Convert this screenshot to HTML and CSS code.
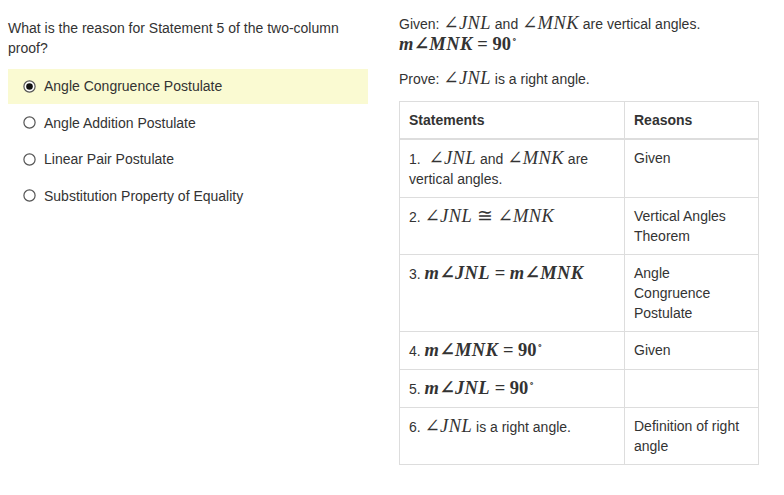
FILE: index.html
```html
<!DOCTYPE html>
<html>
<head>
<meta charset="utf-8">
<link rel="stylesheet" href="styles.css">
</head>
<body>
<div class="page">
  <div class="left">
    <p class="question">What is the reason for Statement 5 of the two-column proof?</p>
    <ul class="options">
      <li class="option selected">
        <svg class="radio" width="13" height="13" viewBox="0 0 13 13"><circle cx="6.5" cy="6.5" r="5.6" fill="#fff" stroke="#555" stroke-width="1.2"/><circle cx="6.5" cy="6.5" r="3.3" fill="#111"/></svg>
        <span>Angle Congruence Postulate</span>
      </li>
      <li class="option">
        <svg class="radio" width="13" height="13" viewBox="0 0 13 13"><circle cx="6.5" cy="6.5" r="5.6" fill="#fff" stroke="#555" stroke-width="1.2"/></svg>
        <span>Angle Addition Postulate</span>
      </li>
      <li class="option">
        <svg class="radio" width="13" height="13" viewBox="0 0 13 13"><circle cx="6.5" cy="6.5" r="5.6" fill="#fff" stroke="#555" stroke-width="1.2"/></svg>
        <span>Linear Pair Postulate</span>
      </li>
      <li class="option">
        <svg class="radio" width="13" height="13" viewBox="0 0 13 13"><circle cx="6.5" cy="6.5" r="5.6" fill="#fff" stroke="#555" stroke-width="1.2"/></svg>
        <span>Substitution Property of Equality</span>
      </li>
    </ul>
  </div>
  <div class="right">
    <p class="given">Given: <span class="m">∠<i>JNL</i></span> and <span class="m">∠<i>MNK</i></span> are vertical angles.<br><span class="m b"><i>m</i>∠<i>MNK</i> = 90<sup>∘</sup></span></p>
    <p class="prove">Prove: <span class="m">∠<i>JNL</i></span> is a right angle.</p>
    <table class="proof">
      <thead>
        <tr><th class="c1">Statements</th><th class="c2">Reasons</th></tr>
      </thead>
      <tbody>
        <tr><td>1. &nbsp;<span class="m">∠<i>JNL</i></span> and <span class="m">∠<i>MNK</i></span> are vertical angles.</td><td>Given</td></tr>
        <tr><td>2. <span class="m">∠<i>JNL</i> ≅ ∠<i>MNK</i></span></td><td>Vertical Angles Theorem</td></tr>
        <tr><td>3. <span class="m b"><i>m</i>∠<i>JNL</i> = <i>m</i>∠<i>MNK</i></span></td><td>Angle Congruence Postulate</td></tr>
        <tr><td>4. <span class="m b"><i>m</i>∠<i>MNK</i> = 90<sup>∘</sup></span></td><td>Given</td></tr>
        <tr><td>5. <span class="m b"><i>m</i>∠<i>JNL</i> = 90<sup>∘</sup></span></td><td></td></tr>
        <tr><td>6. <span class="m">∠<i>JNL</i></span> is a right angle.</td><td>Definition of right angle</td></tr>
      </tbody>
    </table>
  </div>
</div>
</body>
</html>
```
FILE: styles.css
```css
html, body {
  margin: 0;
  padding: 0;
  background: #fff;
}
body {
  font-family: "Liberation Sans", Arial, sans-serif;
  font-size: 14px;
  line-height: 20px;
  color: #333;
}
.page {
  display: flex;
  padding: 0 8px;
}
.left {
  width: 360px;
  padding-top: 18px;
}
.question {
  margin: 0 0 11px 0;
  padding-right: 10px;
}
.options {
  list-style: none;
  margin: 0;
  padding: 0;
}
.option {
  display: flex;
  align-items: center;
  gap: 8px;
  padding: 8px 15px;
  height: 20px;
  margin-bottom: 0.5px;
}
.option.selected {
  background: #fafad2;
  padding-top: 7px;
  padding-bottom: 8px;
}
.radio {
  flex: none;
  display: block;
}
.right {
  margin-left: 31px;
  width: 360px;
  padding-top: 13px;
}
.given {
  margin: 0 0 13px 0;
}
.prove {
  margin: 0 0 12px 0;
}
.m {
  font-family: "Liberation Serif", "DejaVu Serif", serif;
  font-size: 18.5px;
  line-height: 20px;
  white-space: nowrap;
}
.m i {
  font-style: italic;
  letter-spacing: 0.4px;
}
.m.b {
  font-weight: bold;
}
.m sup {
  font-size: 9px;
  vertical-align: 8px;
  line-height: 0;
  margin-left: 1px;
}
.proof {
  border-collapse: collapse;
  width: 360px;
  table-layout: fixed;
}
.proof th, .proof td {
  border: 1px solid #ddd;
  padding: 8px 9px;
  text-align: left;
  vertical-align: top;
  line-height: 20px;
}
.proof th {
  font-weight: bold;
  border-bottom: 2px solid #ddd;
}
.proof td + td {
  padding-right: 14px;
}
.c1 { width: 206px; }
```
